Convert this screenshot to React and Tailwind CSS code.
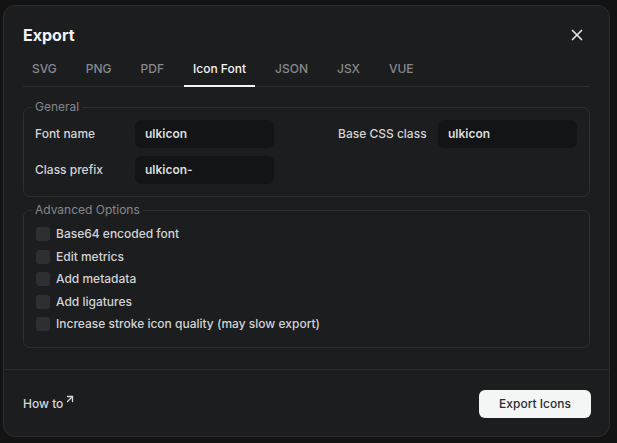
import React, { useState } from 'react';
import { X, ArrowUpRight } from 'lucide-react';

const tabs = ['SVG', 'PNG', 'PDF', 'Icon Font', 'JSON', 'JSX', 'VUE'];

const options = [
  'Base64 encoded font',
  'Edit metrics',
  'Add metadata',
  'Add ligatures',
  'Increase stroke icon quality (may slow export)',
];

const Field = ({ label, value }) => (
  <div className="flex items-center">
    <span className="w-[100px] shrink-0 text-[12px] font-medium text-[#d2d3d5]">{label}</span>
    <div className="flex-1 h-[28px] rounded-[6px] bg-[#131415] px-[10px] flex items-center text-[12px] font-semibold text-[#dcdddf]">
      {value}
    </div>
  </div>
);

const ExportDialog = () => {
  const [active, setActive] = useState('Icon Font');
  const [checked, setChecked] = useState({});

  return (
    <div className="min-h-screen bg-[#131313] pt-[5px] pl-[3px]" style={{ fontFamily: 'Inter, "Noto Sans", sans-serif' }}>
      <div className="w-[607px] h-[432px] rounded-[12px] border border-[#2b2c2f] bg-[#1c1d1f] flex flex-col">
        <div className="flex-1 px-[19px] pt-[15px]">
          <div className="flex items-center justify-between">
            <h1 className="text-[16px] leading-[28px] font-bold text-[#f1f2f3]">Export</h1>
            <button className="w-[26px] h-[26px] flex items-center justify-center text-[#e4e5e7]">
              <X size={18} strokeWidth={2.2} />
            </button>
          </div>

          <div className="mt-[3px] flex gap-[11px] border-b border-[#2e2f32]">
            {tabs.map((t) => (
              <button
                key={t}
                onClick={() => setActive(t)}
                className={`px-[9px] pt-[8px] pb-[7px] text-[12px] leading-[18px] font-medium border-b-2 -mb-px ${
                  active === t ? 'text-[#f3f4f5] border-[#f3f4f5]' : 'text-[#86898d] border-transparent'
                }`}
              >
                {t}
              </button>
            ))}
          </div>

          <fieldset className="mt-[12px] rounded-[7px] border border-[#2e2f32] pl-[11px] pr-3 pt-[5px] pb-3">
            <legend className="ml-[-3px] px-[3px] text-[12px] leading-4 text-[#85878b]">General</legend>
            <div className="grid grid-cols-2 gap-x-16 gap-y-2">
              <Field label="Font name" value="ulkicon" />
              <Field label="Base CSS class" value="ulkicon" />
              <Field label="Class prefix" value="ulkicon-" />
            </div>
          </fieldset>

          <fieldset className="mt-[5px] rounded-[7px] border border-[#2e2f32] pl-[11px] pr-3 pt-[7px] pb-[14px]">
            <legend className="ml-[-3px] px-[3px] text-[12px] leading-4 text-[#85878b]">Advanced Options</legend>
            <div className="flex flex-col gap-[4.5px]">
              {options.map((o) => (
                <label key={o} className="h-[18px] flex items-center gap-[6px] pl-px cursor-pointer">
                  <span
                    onClick={() => setChecked({ ...checked, [o]: !checked[o] })}
                    className={`w-[14px] h-[14px] rounded-[3px] ${checked[o] ? 'bg-[#e5e6e8]' : 'bg-[#2e2f32]'}`}
                  />
                  <span className="text-[12px] font-medium text-[#d2d3d5]">{o}</span>
                </label>
              ))}
            </div>
          </fieldset>
        </div>

        <div className="h-[67px] border-t border-[#2b2c2f] pl-[19px] pr-[18px] pt-[2px] flex items-center justify-between">
          <a className="flex items-start text-[12px] font-medium text-[#d8d9db]">
            How to
            <ArrowUpRight size={12} strokeWidth={2.6} className="ml-[1px] -mt-[2px]" />
          </a>
          <button className="w-[112px] h-[28px] rounded-[6px] bg-[#f4f5f5] text-[12px] font-medium text-[#2b2d31]">
            Export Icons
          </button>
        </div>
      </div>
    </div>
  );
};

export default ExportDialog;
